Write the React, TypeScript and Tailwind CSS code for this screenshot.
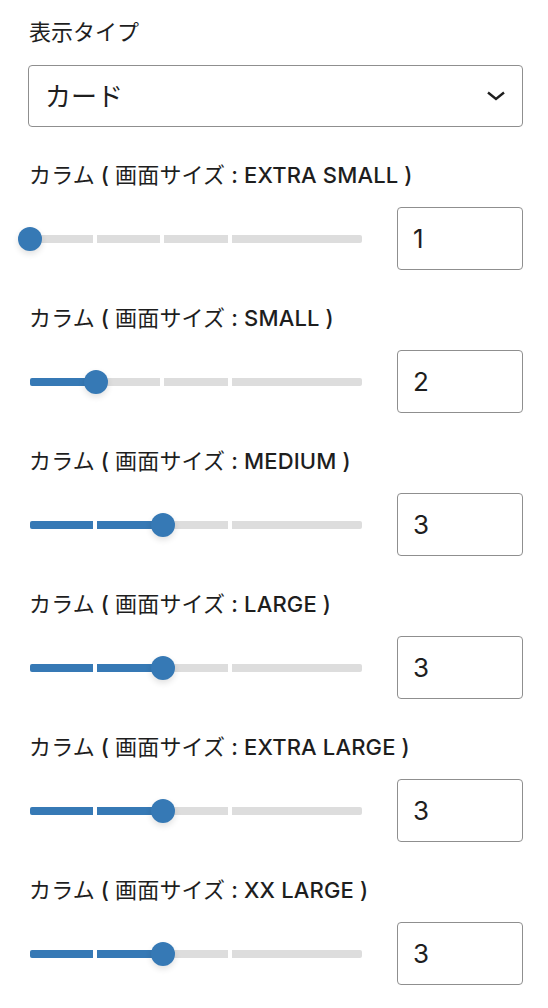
import React from "react";

const rows: { size: string; value: number }[] = [
  { size: "EXTRA SMALL", value: 1 },
  { size: "SMALL", value: 2 },
  { size: "MEDIUM", value: 3 },
  { size: "LARGE", value: 3 },
  { size: "EXTRA LARGE", value: 3 },
  { size: "XX LARGE", value: 3 },
];

const TRACK = 332;
const MIN = 1;
const MAX = 6;
const pos = (v: number) => ((v - MIN) / (MAX - MIN)) * TRACK;

// segment start/end in px along the rail (gaps of 4px between)
const segments: [number, number][] = [
  [0, 63],
  [67, 130],
  [134, 198],
  [202, 332],
];

function Slider({ value }: { value: number }) {
  const p = pos(value);
  return (
    <div className="relative ml-[2px] flex h-[24px] w-[332px] shrink-0 items-center">
      <div className="grid h-[8px] w-full grid-cols-[63px_63px_64px_1fr] gap-[4px]">
        {segments.map(([s, e], i) => {
          const fill = Math.max(0, Math.min(e - s, p - s));
          return (
            <div
              key={i}
              className={`flex h-[8px] overflow-hidden bg-[#dddddd] ${
                i === 0 ? "rounded-l-[2px]" : ""
              } ${i === 3 ? "rounded-r-[2px]" : ""}`}
            >
              <div className="h-full bg-[#3679b5]" style={{ width: fill }} />
            </div>
          );
        })}
      </div>
      <div
        className="absolute top-0 h-[24px] w-[24px] rounded-full bg-[#3679b5] shadow-[0_3px_6px_rgba(0,0,0,0.12)]"
        style={{ left: p - 12 }}
      />
    </div>
  );
}

function Label({ size }: { size: string }) {
  return (
    <div className="h-[24px] pl-[1px] text-[22px] leading-[24px] font-medium tracking-[0.15px] whitespace-nowrap">
      <span className="font-normal">カラム</span> ( <span className="font-normal">画面サイズ</span> : {size} )
    </div>
  );
}

export default function App() {
  return (
    <div className="flex min-h-[1008px] w-[548px] flex-col gap-[36px] bg-white pl-[28px] pr-[25px] pt-[20px] font-['Inter','Noto_Sans_CJK_JP',sans-serif] text-[#1e1e1e]">
      <div className="flex flex-col gap-[21px]">
        <div className="h-[24px] pl-[1px] text-[22px] leading-[24px]">表示タイプ</div>
        <div className="flex h-[62px] items-center justify-between rounded-[4px] border border-[#8f8f8f] pl-[16px] pr-[16px] text-[26px]">
          <span>カード</span>
          <svg width="20" height="12" viewBox="0 0 20 12" fill="none">
            <path d="M2 2.5 L10 9 L18 2.5" stroke="#1e1e1e" strokeWidth="2.4" />
          </svg>
        </div>
      </div>
      {rows.map((r) => (
        <div key={r.size} className="flex flex-col gap-[20px]">
          <Label size={r.size} />
          <div className="flex h-[63px] items-center gap-[35px]">
            <Slider value={r.value} />
            <div className="flex h-[63px] w-[126px] items-center rounded-[4px] border border-[#8f8f8f] pl-[15px] text-[26px]">
              {r.value}
            </div>
          </div>
        </div>
      ))}
    </div>
  );
}
